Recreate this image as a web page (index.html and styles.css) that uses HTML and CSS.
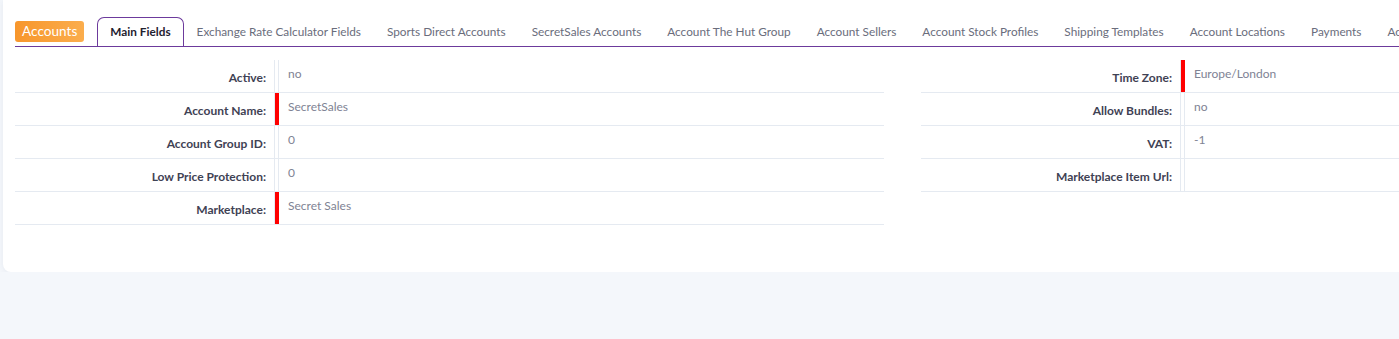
FILE: index.html
```html
<!DOCTYPE html>
<html lang="en">
<head>
<meta charset="UTF-8">
<title>Accounts - Main Fields</title>
<link rel="stylesheet" href="styles.css">
</head>
<body>
    <div class="topbar"><span class="topbar-mark"></span></div>

    <div class="card">
        <!-- Tabs -->
        <div class="tabs">
            <span class="badge">Accounts</span>
            <a class="tab active">Main Fields</a>
            <a class="tab">Exchange Rate Calculator Fields</a>
            <a class="tab">Sports Direct Accounts</a>
            <a class="tab">SecretSales Accounts</a>
            <a class="tab">Account The Hut Group</a>
            <a class="tab">Account Sellers</a>
            <a class="tab">Account Stock Profiles</a>
            <a class="tab">Shipping Templates</a>
            <a class="tab">Account Locations</a>
            <a class="tab">Payments</a>
            <a class="tab">Account Settings</a>
        </div>

        <!-- Fields -->
        <div class="fields">
            <div class="field-table">
                <div class="row">
                    <div class="label">Active:</div>
                    <div class="mark"></div>
                    <div class="value">no</div>
                </div>
                <div class="row">
                    <div class="label">Account Name:</div>
                    <div class="mark required"></div>
                    <div class="value">SecretSales</div>
                </div>
                <div class="row">
                    <div class="label">Account Group ID:</div>
                    <div class="mark"></div>
                    <div class="value">0</div>
                </div>
                <div class="row">
                    <div class="label">Low Price Protection:</div>
                    <div class="mark"></div>
                    <div class="value">0</div>
                </div>
                <div class="row">
                    <div class="label">Marketplace:</div>
                    <div class="mark required"></div>
                    <div class="value">Secret Sales</div>
                </div>
            </div>

            <div class="field-table">
                <div class="row">
                    <div class="label">Time Zone:</div>
                    <div class="mark required"></div>
                    <div class="value">Europe/London</div>
                </div>
                <div class="row">
                    <div class="label">Allow Bundles:</div>
                    <div class="mark"></div>
                    <div class="value">no</div>
                </div>
                <div class="row">
                    <div class="label">VAT:</div>
                    <div class="mark"></div>
                    <div class="value">-1</div>
                </div>
                <div class="row">
                    <div class="label">Marketplace Item Url:</div>
                    <div class="mark"></div>
                    <div class="value"></div>
                </div>
            </div>
        </div>
    </div>
</body>
</html>
```

FILE: styles.css
```css
/* General */
* {
    margin: 0;
    padding: 0;
    box-sizing: border-box;
}

html, body {
    overflow: hidden;
}

body {
    background: #f4f7fb;
    font-family: 'Lato', 'Open Sans', sans-serif;
    font-size: 12px;
    color: #3f4254;
}

/* Top strip */
.topbar {
    height: 0;
    padding-left: 104px;
}

.topbar-mark {
    display: block;
    width: 43px;
    height: 3px;
    background: #fffbe3;
}

/* Card */
.card {
    width: 1440px;
    margin-left: 3px;
    padding: 17px 12px 47px;
    background: #fff;
    border-radius: 0 0 0 8px;
    box-shadow: 0 1px 6px rgba(60, 80, 120, 0.08);
}

/* Tabs */
.tabs {
    display: flex;
    align-items: center;
    border-bottom: 1px solid #6c3a9c;
    white-space: nowrap;
}

.badge {
    display: inline-block;
    height: 21px;
    padding: 0 7px;
    margin-right: 13px;
    line-height: 21px;
    font-size: 13.6px;
    color: #fff;
    background: linear-gradient(90deg, #f7962c, #fbad4c);
    border-radius: 3px;
}

.tab {
    display: block;
    padding: 5px 12px 6px;
    line-height: 17px;
    font-size: 11.8px;
    color: #6a6d7c;
    border: 1px solid transparent;
    border-bottom: none;
    border-radius: 7px 7px 0 0;
    cursor: pointer;
}

.tab.active {
    border-color: #6c3a9c;
    color: #1f2230;
    font-weight: 700;
}

/* Fields */
.fields {
    display: flex;
    gap: 37px;
    padding-top: 13px;
}

.field-table {
    width: 869px;
    flex-shrink: 0;
}

.row {
    display: flex;
    height: 33px;
    border-bottom: 1px solid #e5eaf1;
}

.label {
    width: 260px;
    padding: 10px 8px 0 0;
    text-align: right;
    font-weight: 700;
    color: #3f4254;
    border-right: 1px solid #e5eaf1;
}

.mark {
    width: 4px;
    border-right: 1px solid #e5eaf1;
}

.mark.required {
    background: #ff0000;
    border-color: #ff0000;
}

.value {
    flex: 1;
    padding: 6px 9px 0;
    color: #808394;
}
```
